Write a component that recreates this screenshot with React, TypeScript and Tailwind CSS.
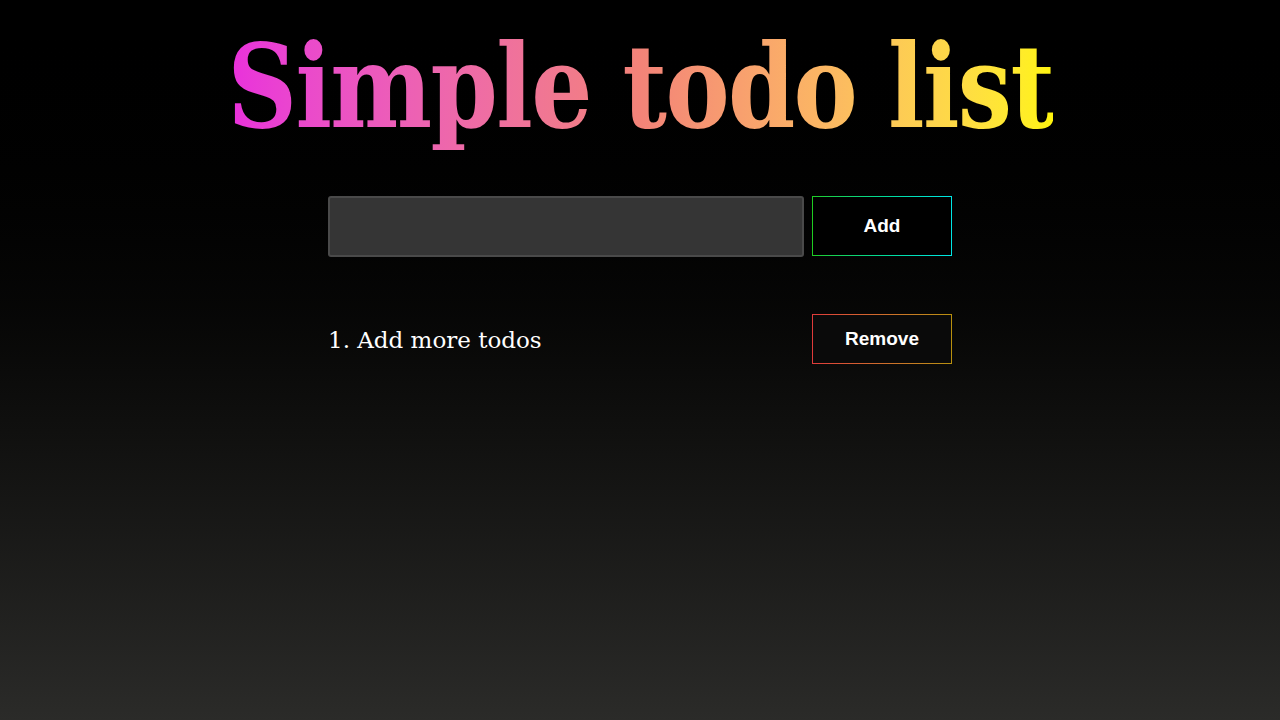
import React from "react";

export default function App() {
  return (
    <div className="min-h-[720px] w-full bg-linear-to-b from-[#000000] to-[#2b2b29] flex flex-col items-center">
      <h1
        className="mt-[22px] inline-block scale-x-[0.83] text-[116px] leading-[128px] font-bold bg-linear-to-r from-[#e92fdc] via-[#f38378] to-[#fff40a] bg-clip-text text-transparent tracking-[-2px]"
        style={{ fontFamily: '"Roboto Slab", "DejaVu Serif", serif' }}
      >
        Simple todo list
      </h1>
      <div className="mt-[46px] w-[624px] flex flex-col">
        <div className="flex gap-2 items-start">
          <input
            className="w-[476px] h-[61px] bg-[#353535] border-2 border-[#4a4a4a] rounded-[3px] outline-none"
            type="text"
          />
          <div className="p-px bg-linear-to-r from-[#1fcc1f] to-[#00e6e6]">
            <button
              className="w-[138px] h-[58px] pt-px bg-black text-white font-bold text-[19px]"
              style={{ fontFamily: '"Liberation Sans", Arial, sans-serif' }}
            >
              Add
            </button>
          </div>
        </div>
        <div className="mt-[57px] flex items-center justify-between">
          <span
            className="text-white text-[23px] pt-[3px]"
            style={{ fontFamily: '"Roboto Slab", "DejaVu Serif", serif' }}
          >
            1. Add more todos
          </span>
          <div className="p-px bg-linear-to-r from-[#e03a3a] to-[#b8900d]">
            <button
              className="w-[138px] h-[48px] bg-[#0a0a0a] text-white font-bold text-[19px]"
              style={{ fontFamily: '"Liberation Sans", Arial, sans-serif' }}
            >
              Remove
            </button>
          </div>
        </div>
      </div>
    </div>
  );
}
